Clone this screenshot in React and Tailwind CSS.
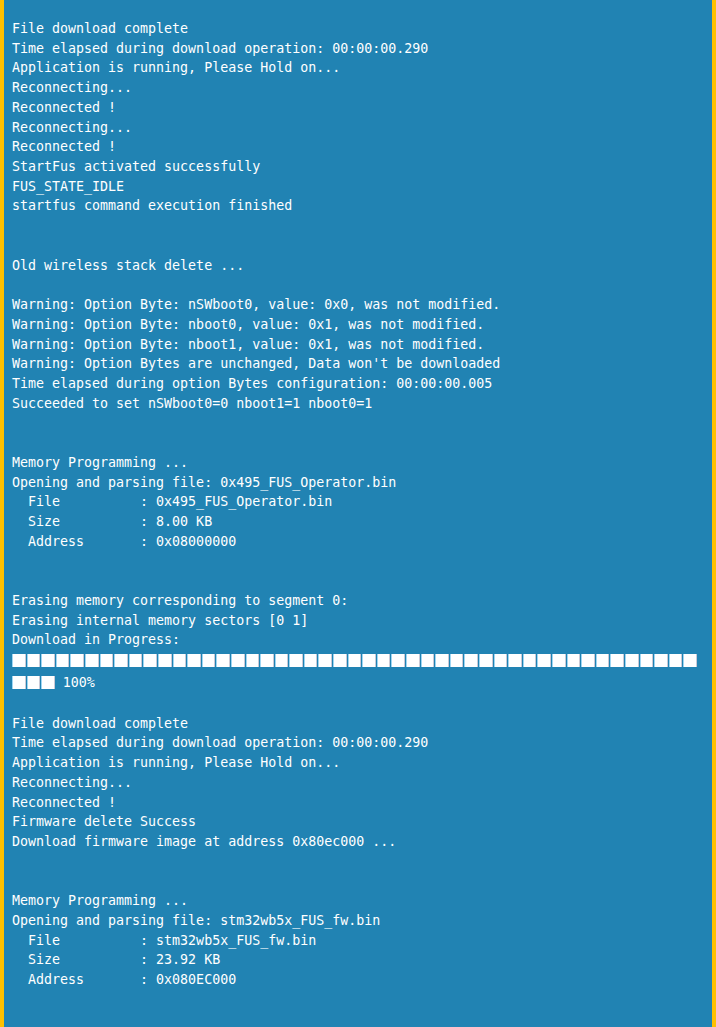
import React from "react";

const before = [
  "File download complete",
  "Time elapsed during download operation: 00:00:00.290",
  "Application is running, Please Hold on...",
  "Reconnecting...",
  "Reconnected !",
  "Reconnecting...",
  "Reconnected !",
  "StartFus activated successfully",
  "FUS_STATE_IDLE",
  "startfus command execution finished",
  "",
  "",
  "Old wireless stack delete ...",
  "",
  "Warning: Option Byte: nSWboot0, value: 0x0, was not modified.",
  "Warning: Option Byte: nboot0, value: 0x1, was not modified.",
  "Warning: Option Byte: nboot1, value: 0x1, was not modified.",
  "Warning: Option Bytes are unchanged, Data won't be downloaded",
  "Time elapsed during option Bytes configuration: 00:00:00.005",
  "Succeeded to set nSWboot0=0 nboot1=1 nboot0=1",
  "",
  "",
  "Memory Programming ...",
  "Opening and parsing file: 0x495_FUS_Operator.bin",
  "  File          : 0x495_FUS_Operator.bin",
  "  Size          : 8.00 KB",
  "  Address       : 0x08000000",
  "",
  "",
  "Erasing memory corresponding to segment 0:",
  "Erasing internal memory sectors [0 1]",
  "Download in Progress:",
];

const after = [
  "",
  "File download complete",
  "Time elapsed during download operation: 00:00:00.290",
  "Application is running, Please Hold on...",
  "Reconnecting...",
  "Reconnected !",
  "Firmware delete Success",
  "Download firmware image at address 0x80ec000 ...",
  "",
  "",
  "Memory Programming ...",
  "Opening and parsing file: stm32wb5x_FUS_fw.bin",
  "  File          : stm32wb5x_FUS_fw.bin",
  "  Size          : 23.92 KB",
  "  Address       : 0x080EC000",
];

function Line({ text }) {
  return <div className="h-[19.72px] leading-[19.72px] whitespace-pre">{text || " "}</div>;
}

function Box() {
  return <div className="w-[13.6px] h-[13px] mr-[1px] bg-white border-l border-r border-l-[#9fd6f2] border-r-[#c9c9d6] shrink-0" />;
}

export default function App() {
  return (
    <div
      className="w-[716px] h-[1027px] bg-[#2183b3] border-l-4 border-r-4 border-[#ffc000] overflow-hidden pt-[19px] pl-[8px] text-white text-[13.3px]"
      style={{ fontFamily: '"DejaVu Sans Mono", "Liberation Mono", monospace' }}
    >
      {before.map((t, i) => (
        <Line key={"b" + i} text={t} />
      ))}
      <div className="h-[22px] pt-[4px] flex">
        {Array.from({ length: 47 }).map((_, i) => (
          <Box key={i} />
        ))}
      </div>
      <div className="h-[22px] pt-[4px] flex items-start">
        <Box />
        <Box />
        <Box />
        <span className="ml-[7px] leading-[13px]">100%</span>
      </div>
      {after.map((t, i) => (
        <Line key={"a" + i} text={t} />
      ))}
    </div>
  );
}
